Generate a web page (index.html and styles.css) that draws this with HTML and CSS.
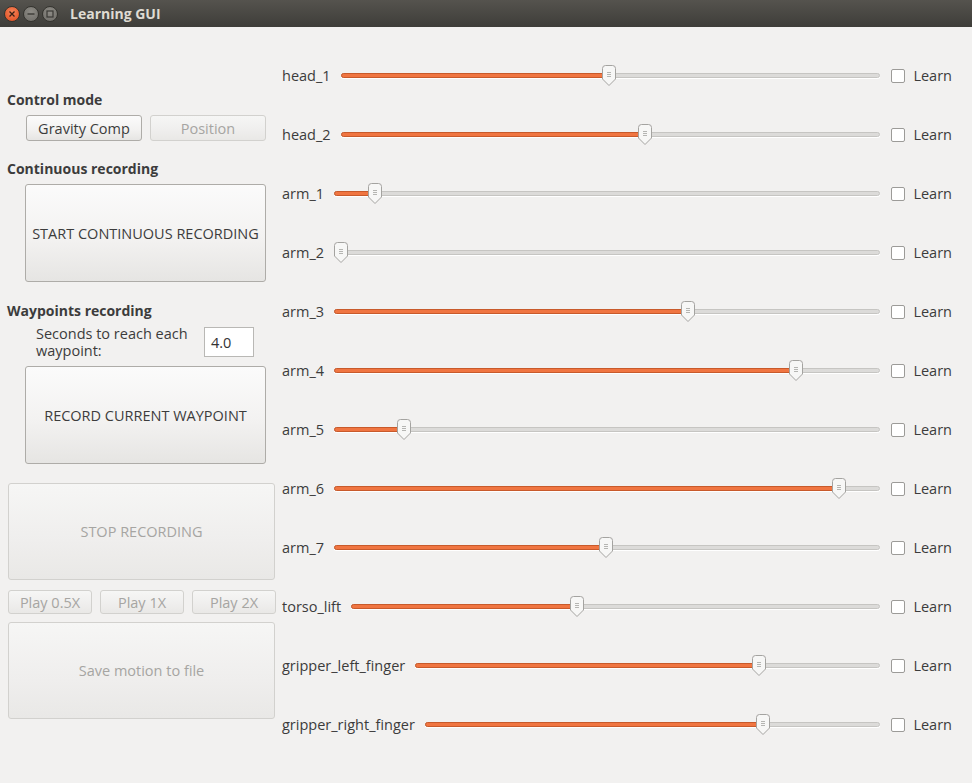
FILE: index.html
```html
<!DOCTYPE html>
<html>
<head>
<meta charset="utf-8">
<link rel="stylesheet" href="styles.css">
</head>
<body>
<div class="window">
  <div class="titlebar">
    <div class="wbtns">
      <span class="wb close"><svg width="16" height="16" viewBox="0 0 16 16"><path d="M5.5 5.5 L10.5 10.5 M10.5 5.5 L5.5 10.5" stroke="#3a2014" stroke-width="1.3"/></svg></span>
      <span class="wb"><svg width="16" height="16" viewBox="0 0 16 16"><path d="M4.5 8 H11.5" stroke="#3b3a36" stroke-width="1.4"/></svg></span>
      <span class="wb"><svg width="16" height="16" viewBox="0 0 16 16"><rect x="5" y="5" width="6" height="6" fill="none" stroke="#3b3a36" stroke-width="1.2"/></svg></span>
    </div>
    <div class="title">Learning GUI</div>
  </div>
  <div class="content">
    <div class="left">
      <div class="heading h1">Control mode</div>
      <div class="moderow">
        <button class="btn small">Gravity Comp</button>
        <button class="btn small disabled">Position</button>
      </div>
      <div class="heading h2">Continuous recording</div>
      <button class="btn big inset">START CONTINUOUS RECORDING</button>
      <div class="heading h3">Waypoints recording</div>
      <div class="secrow">
        <div class="sectext">Seconds to reach each<br>waypoint:</div>
        <div class="input">4.0</div>
      </div>
      <button class="btn big inset">RECORD CURRENT WAYPOINT</button>
      <button class="btn big wide disabled stop">STOP RECORDING</button>
      <div class="playrow">
        <button class="btn play disabled">Play 0.5X</button>
        <button class="btn play disabled">Play 1X</button>
        <button class="btn play disabled">Play 2X</button>
      </div>
      <button class="btn big wide disabled save">Save motion to file</button>
    </div>
    <div class="right">
      <div class="row"><span class="lbl">head_1</span><div class="slider" style="--v:0.497"><div class="groove"></div><div class="fill"></div><div class="handle"><svg width="14" height="21" viewBox="0 0 14 21"><path class="hp" d="M3.5 0.5 H10.5 Q13.5 0.5 13.5 3.5 V14 L7 20.5 L0.5 14 V3.5 Q0.5 0.5 3.5 0.5 Z"/><path d="M5 7.5 H9 M5 9.5 H9 M5 11.5 H9" stroke="#a3a3a1" stroke-width="0.8"/></svg></div></div><span class="cb"></span><span class="learn">Learn</span></div>
      <div class="row"><span class="lbl">head_2</span><div class="slider" style="--v:0.565"><div class="groove"></div><div class="fill"></div><div class="handle"><svg width="14" height="21" viewBox="0 0 14 21"><path class="hp" d="M3.5 0.5 H10.5 Q13.5 0.5 13.5 3.5 V14 L7 20.5 L0.5 14 V3.5 Q0.5 0.5 3.5 0.5 Z"/><path d="M5 7.5 H9 M5 9.5 H9 M5 11.5 H9" stroke="#a3a3a1" stroke-width="0.8"/></svg></div></div><span class="cb"></span><span class="learn">Learn</span></div>
      <div class="row"><span class="lbl">arm_1</span><div class="slider" style="--v:0.064"><div class="groove"></div><div class="fill"></div><div class="handle"><svg width="14" height="21" viewBox="0 0 14 21"><path class="hp" d="M3.5 0.5 H10.5 Q13.5 0.5 13.5 3.5 V14 L7 20.5 L0.5 14 V3.5 Q0.5 0.5 3.5 0.5 Z"/><path d="M5 7.5 H9 M5 9.5 H9 M5 11.5 H9" stroke="#a3a3a1" stroke-width="0.8"/></svg></div></div><span class="cb"></span><span class="learn">Learn</span></div>
      <div class="row"><span class="lbl">arm_2</span><div class="slider" style="--v:0"><div class="groove"></div><div class="fill"></div><div class="handle"><svg width="14" height="21" viewBox="0 0 14 21"><path class="hp" d="M3.5 0.5 H10.5 Q13.5 0.5 13.5 3.5 V14 L7 20.5 L0.5 14 V3.5 Q0.5 0.5 3.5 0.5 Z"/><path d="M5 7.5 H9 M5 9.5 H9 M5 11.5 H9" stroke="#a3a3a1" stroke-width="0.8"/></svg></div></div><span class="cb"></span><span class="learn">Learn</span></div>
      <div class="row"><span class="lbl">arm_3</span><div class="slider" style="--v:0.652"><div class="groove"></div><div class="fill"></div><div class="handle"><svg width="14" height="21" viewBox="0 0 14 21"><path class="hp" d="M3.5 0.5 H10.5 Q13.5 0.5 13.5 3.5 V14 L7 20.5 L0.5 14 V3.5 Q0.5 0.5 3.5 0.5 Z"/><path d="M5 7.5 H9 M5 9.5 H9 M5 11.5 H9" stroke="#a3a3a1" stroke-width="0.8"/></svg></div></div><span class="cb"></span><span class="learn">Learn</span></div>
      <div class="row"><span class="lbl">arm_4</span><div class="slider" style="--v:0.854"><div class="groove"></div><div class="fill"></div><div class="handle"><svg width="14" height="21" viewBox="0 0 14 21"><path class="hp" d="M3.5 0.5 H10.5 Q13.5 0.5 13.5 3.5 V14 L7 20.5 L0.5 14 V3.5 Q0.5 0.5 3.5 0.5 Z"/><path d="M5 7.5 H9 M5 9.5 H9 M5 11.5 H9" stroke="#a3a3a1" stroke-width="0.8"/></svg></div></div><span class="cb"></span><span class="learn">Learn</span></div>
      <div class="row"><span class="lbl">arm_5</span><div class="slider" style="--v:0.118"><div class="groove"></div><div class="fill"></div><div class="handle"><svg width="14" height="21" viewBox="0 0 14 21"><path class="hp" d="M3.5 0.5 H10.5 Q13.5 0.5 13.5 3.5 V14 L7 20.5 L0.5 14 V3.5 Q0.5 0.5 3.5 0.5 Z"/><path d="M5 7.5 H9 M5 9.5 H9 M5 11.5 H9" stroke="#a3a3a1" stroke-width="0.8"/></svg></div></div><span class="cb"></span><span class="learn">Learn</span></div>
      <div class="row"><span class="lbl">arm_6</span><div class="slider" style="--v:0.936"><div class="groove"></div><div class="fill"></div><div class="handle"><svg width="14" height="21" viewBox="0 0 14 21"><path class="hp" d="M3.5 0.5 H10.5 Q13.5 0.5 13.5 3.5 V14 L7 20.5 L0.5 14 V3.5 Q0.5 0.5 3.5 0.5 Z"/><path d="M5 7.5 H9 M5 9.5 H9 M5 11.5 H9" stroke="#a3a3a1" stroke-width="0.8"/></svg></div></div><span class="cb"></span><span class="learn">Learn</span></div>
      <div class="row"><span class="lbl">arm_7</span><div class="slider" style="--v:0.498"><div class="groove"></div><div class="fill"></div><div class="handle"><svg width="14" height="21" viewBox="0 0 14 21"><path class="hp" d="M3.5 0.5 H10.5 Q13.5 0.5 13.5 3.5 V14 L7 20.5 L0.5 14 V3.5 Q0.5 0.5 3.5 0.5 Z"/><path d="M5 7.5 H9 M5 9.5 H9 M5 11.5 H9" stroke="#a3a3a1" stroke-width="0.8"/></svg></div></div><span class="cb"></span><span class="learn">Learn</span></div>
      <div class="row"><span class="lbl">torso_lift</span><div class="slider" style="--v:0.425"><div class="groove"></div><div class="fill"></div><div class="handle"><svg width="14" height="21" viewBox="0 0 14 21"><path class="hp" d="M3.5 0.5 H10.5 Q13.5 0.5 13.5 3.5 V14 L7 20.5 L0.5 14 V3.5 Q0.5 0.5 3.5 0.5 Z"/><path d="M5 7.5 H9 M5 9.5 H9 M5 11.5 H9" stroke="#a3a3a1" stroke-width="0.8"/></svg></div></div><span class="cb"></span><span class="learn">Learn</span></div>
      <div class="row"><span class="lbl">gripper_left_finger</span><div class="slider" style="--v:0.747"><div class="groove"></div><div class="fill"></div><div class="handle"><svg width="14" height="21" viewBox="0 0 14 21"><path class="hp" d="M3.5 0.5 H10.5 Q13.5 0.5 13.5 3.5 V14 L7 20.5 L0.5 14 V3.5 Q0.5 0.5 3.5 0.5 Z"/><path d="M5 7.5 H9 M5 9.5 H9 M5 11.5 H9" stroke="#a3a3a1" stroke-width="0.8"/></svg></div></div><span class="cb"></span><span class="learn">Learn</span></div>
      <div class="row"><span class="lbl">gripper_right_finger</span><div class="slider" style="--v:0.749"><div class="groove"></div><div class="fill"></div><div class="handle"><svg width="14" height="21" viewBox="0 0 14 21"><path class="hp" d="M3.5 0.5 H10.5 Q13.5 0.5 13.5 3.5 V14 L7 20.5 L0.5 14 V3.5 Q0.5 0.5 3.5 0.5 Z"/><path d="M5 7.5 H9 M5 9.5 H9 M5 11.5 H9" stroke="#a3a3a1" stroke-width="0.8"/></svg></div></div><span class="cb"></span><span class="learn">Learn</span></div>
    </div>
  </div>
</div>
</body>
</html>
```

FILE: styles.css
```css
* { box-sizing: border-box; }
html, body { margin: 0; padding: 0; }
body {
  width: 972px;
  height: 783px;
  overflow: hidden;
  background: #f2f1f0;
  font-family: "Open Sans", "DejaVu Sans", sans-serif;
  font-size: 14.5px;
  color: #3c3c3c;
}
.window { width: 972px; height: 783px; display: flex; flex-direction: column; }
.titlebar {
  height: 27px;
  flex: none;
  background: linear-gradient(#55534e, #3e3d39);
  display: flex;
  align-items: center;
}
.wbtns { display: flex; gap: 3px; margin-left: 4px; }
.wb {
  width: 16px; height: 16px; border-radius: 50%;
  background: radial-gradient(circle at 50% 35%, #8e8c86, #6d6b66);
  border: 1px solid #35342f;
  display: flex; align-items: center; justify-content: center;
}
.wb svg { display: block; margin: -1px; }
.wb.close { background: radial-gradient(circle at 50% 35%, #f5845a, #df4a1c); }
.title {
  margin-left: 12px;
  color: #dfdbd2;
  font-weight: bold;
  font-size: 14px;
}
.content { flex: 1; display: flex; }
.left { width: 282px; flex: none; padding-top: 64px; display: flex; flex-direction: column; }
.heading { font-weight: bold; font-size: 14px; line-height: 18px; height: 18px; margin-left: 7px; }
.h2 { margin-top: 19px; }
.h3 { margin-top: 20px; }
.moderow { display: flex; gap: 8px; margin: 6px 0 0 26px; }
.btn {
  font-family: inherit;
  font-size: 14.5px;
  color: #3c3c3c;
  border: 1px solid #aeaca8;
  border-radius: 3px;
  background: linear-gradient(#fbfbfb, #f3f2f1 55%, #e6e5e3);
  padding: 0;
  display: flex; align-items: center; justify-content: center;
}
.btn.small { width: 116px; height: 26px; }
.btn.disabled {
  color: #a6a5a2;
  border-color: #d2d1ce;
  background: linear-gradient(#f6f6f5, #efeeed 60%, #e9e8e6);
}
.btn.big { height: 98px; }
.btn.inset { width: 241px; margin-left: 25px; margin-top: 6px; }
.secrow { display: flex; align-items: center; height: 40px; padding-top: 4px; margin-left: 36px; }
.sectext { line-height: 17.5px; width: 168px; }
.input {
  width: 50px; height: 30px;
  background: #fff;
  border: 1px solid #b9b8b5;
  display: flex; align-items: center;
  padding-left: 6px;
  color: #333;
}
.btn.inset + .btn.wide { margin-top: 19px; }
.btn.wide { width: 267px; margin-left: 8px; height: 97px; }
.playrow { display: flex; gap: 8px; margin: 10px 0 0 8px; }
.btn.play { width: 84px; height: 24px; }
.btn.save { margin-top: 8px; }
.right { flex: 1; padding-top: 19px; padding-right: 20px; }
.row { height: 59px; display: flex; align-items: center; }
.lbl { margin-right: 10px; white-space: nowrap; }
.slider { flex: 1; height: 21px; position: relative; }
.groove {
  position: absolute; left: 0; right: 0; top: 8px; height: 5px;
  border-radius: 3px;
  background: #dcdbd9;
  border: 1px solid #c6c5c2;
  box-shadow: 0 1px 0 #fff;
}
.fill {
  position: absolute; left: 0; top: 8px; height: 5px;
  width: calc(var(--v) * (100% - 14px) + 7px);
  border-radius: 3px;
  background: #f07541;
  border: 1px solid #c85a2b;
}
.handle {
  position: absolute; top: 0;
  left: calc(var(--v) * (100% - 14px));
  width: 14px; height: 21px;
}
.handle svg { display: block; }
.hp { fill: #f7f7f6; stroke: #a4a3a0; stroke-width: 1; }
.cb {
  width: 14px; height: 14px;
  margin-left: 11px;
  background: #fff;
  border: 1px solid #9c9b98;
  border-radius: 2px;
}
.learn { margin-left: 8px; }
```
